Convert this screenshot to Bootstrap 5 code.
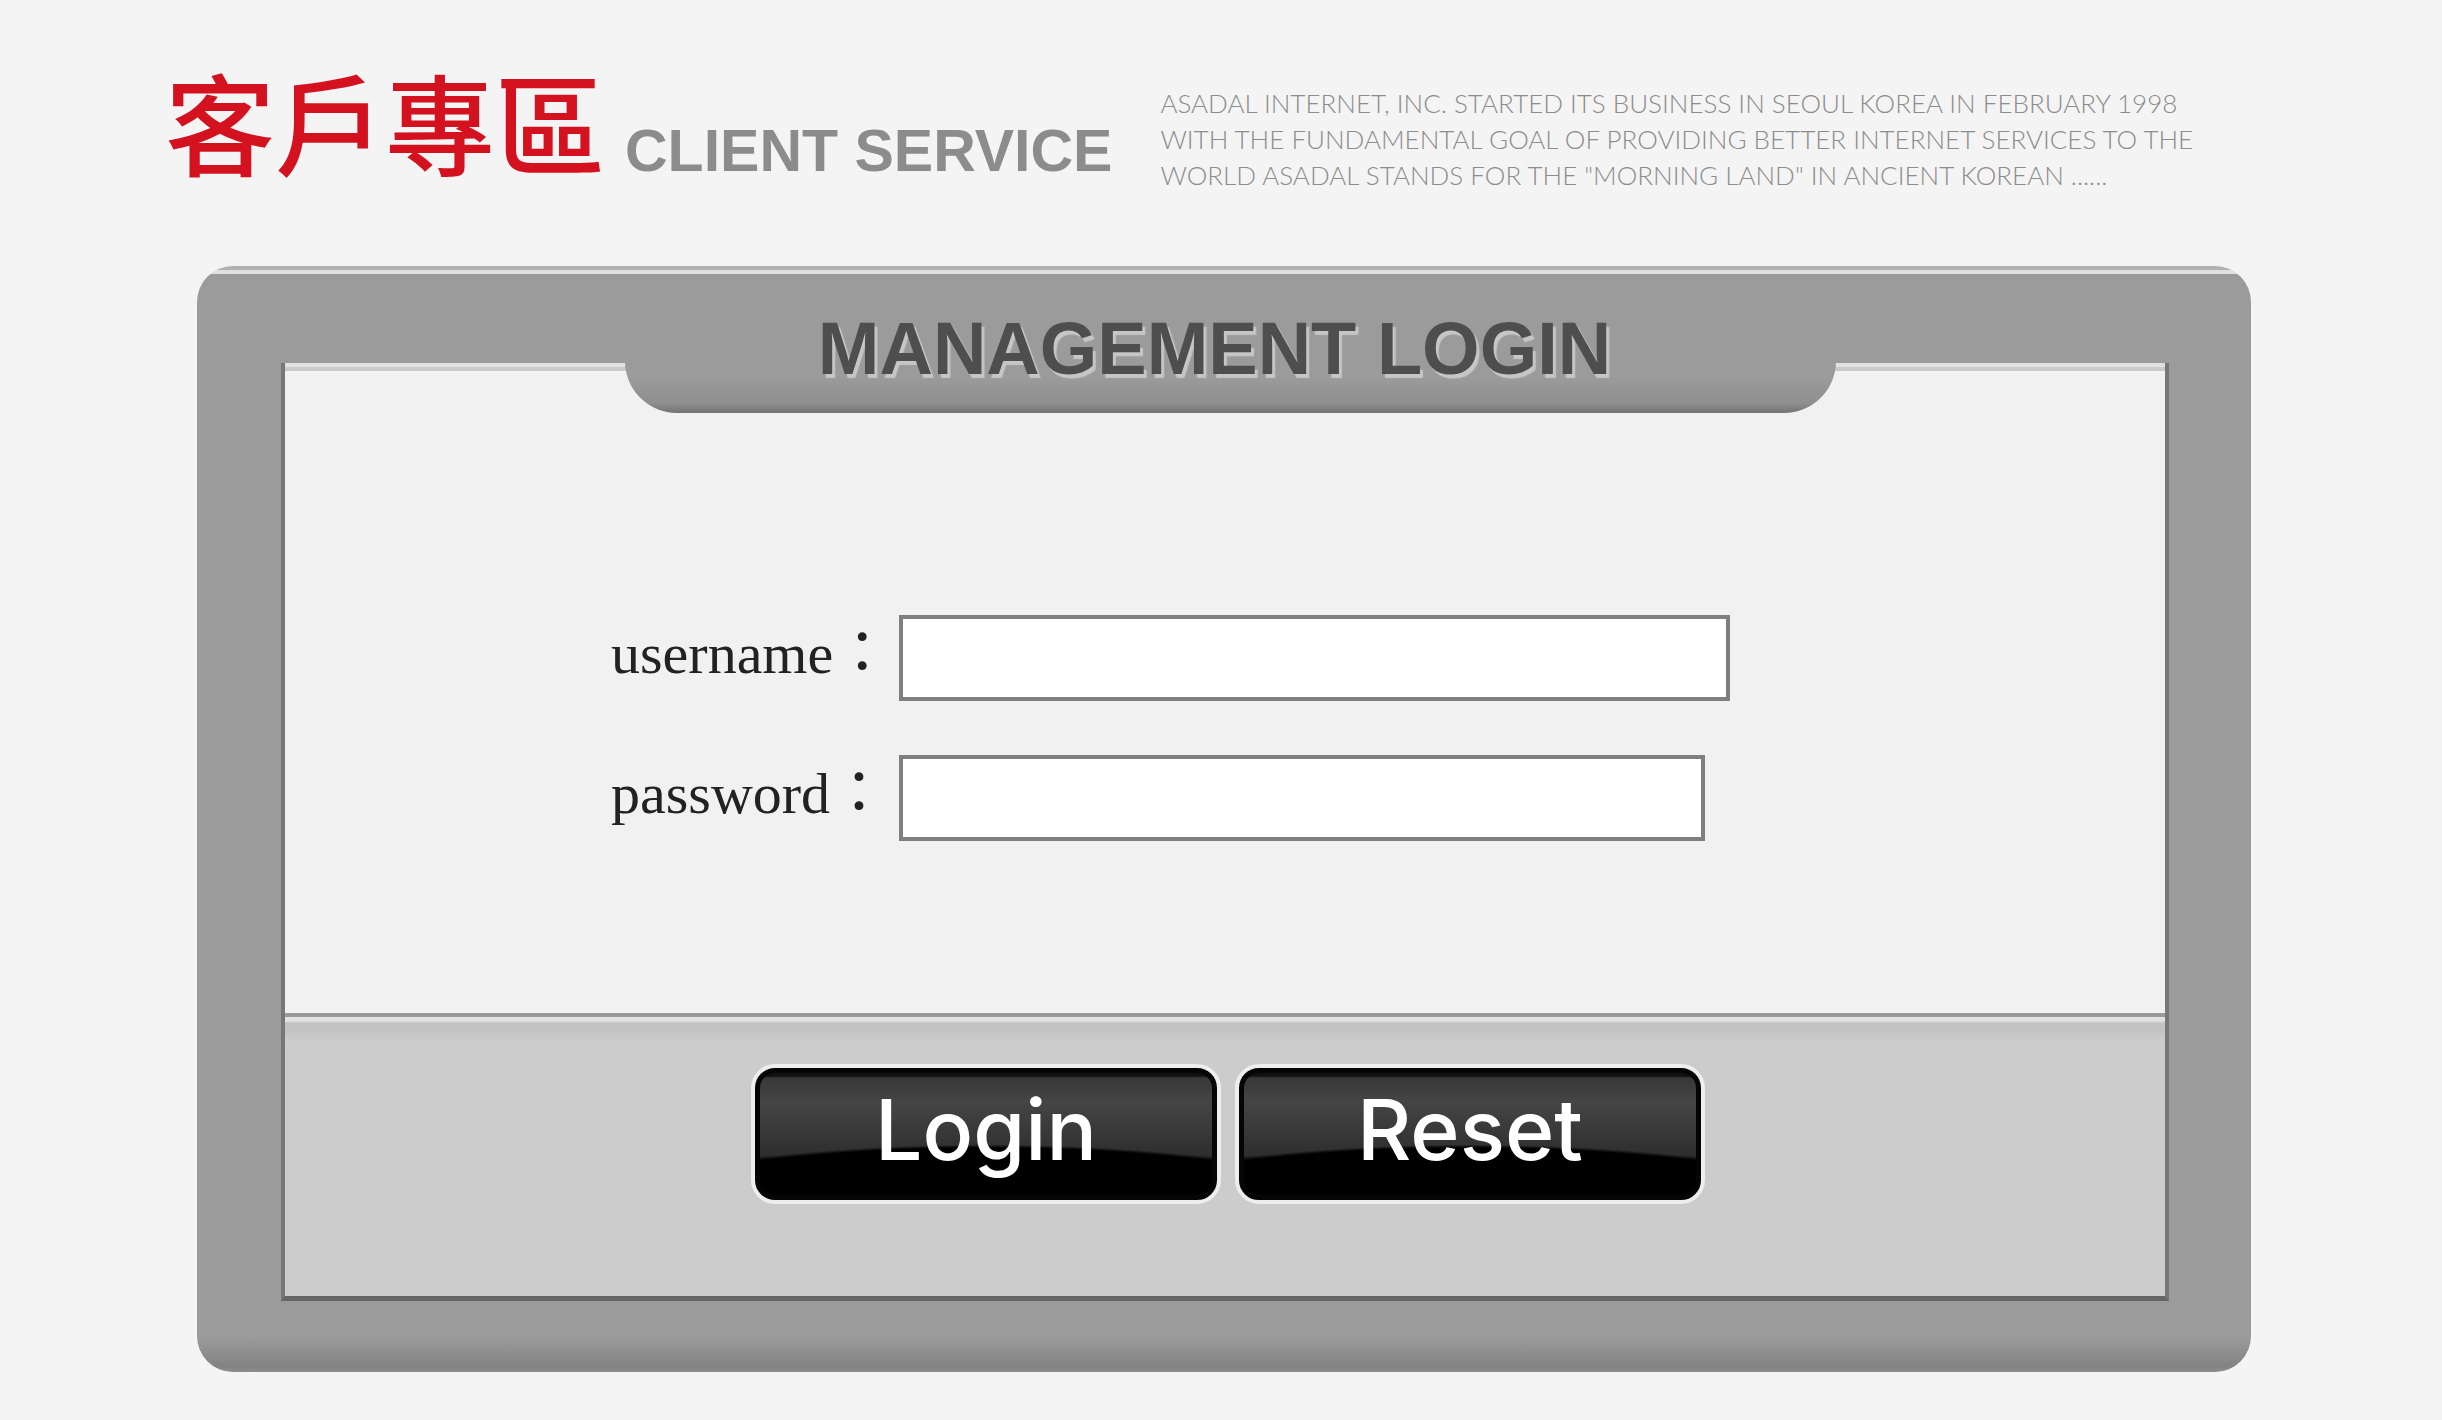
<!DOCTYPE html>
<html lang="zh-Hant">
<head>
<meta charset="utf-8">
<meta name="viewport" content="width=device-width, initial-scale=1">
<title>客戶專區 CLIENT SERVICE</title>
<link rel="stylesheet" href="https://cdn.jsdelivr.net/npm/bootstrap@5.3.0/dist/css/bootstrap.min.css">
<style>
body { background: #f4f4f4; font-family: "Liberation Sans", Arial, sans-serif; }

/* Page heading */
.site-head { padding: 64px 165px 0; height: 266px; }
.brand-zh { color: #d4121f; font: 500 110px/112px "Noto Sans CJK TC", sans-serif; }
.brand-en { color: #8c8c8c; font-size: 59px; line-height: 66px; font-weight: 700; margin: 54px 0 0 20px; }
.intro { color: #8c8c8c; font: 300 26px/36px Lato, "Liberation Sans", sans-serif; margin: 21px 0 0 48px; }

/* Grey frame with a highlight along its top edge */
.frame {
  margin: 0 191px 48px 197px;
  padding: 9px 82px 71px 84px;
  border-radius: 36px;
  background:
    linear-gradient(#b0b0b0 0 4px, #e0e0e0 4px 8px, transparent 8px) top,
    linear-gradient(transparent calc(100% - 36px), #838383 calc(100% - 6px), #8c8c8c) #9b9b9b;
}
.tab {
  margin: 0 333px -50px 344px;
  padding: 38px 32px 28px 0;
  z-index: 1;
  border-radius: 0 0 52px 52px;
  background: linear-gradient(#9b9b9b calc(100% - 36px), #8f8f8f calc(100% - 10px), #747474);
  color: #4e4e4e;
  font-size: 74px; line-height: 72px; font-weight: 700;
  text-shadow: 3px 4px 1px #c6c6c6;
}
.pane { border: solid #777; border-width: 0 4px 5px; border-bottom-color: #666; }
.pane-form {
  padding: 248px 0 168px 326px;
  gap: 46px;
  background: linear-gradient(#e2e2e2 0 4px, #cacaca 4px 8px, #f1f1f1 8px);
}
.field-name { width: 288px; color: #222; font: 400 58px/86px "Liberation Serif", "Noto Sans CJK TC", serif; padding-bottom: 8px; }
.field-box { height: 86px; border: 4px solid #7f7f7f; border-radius: 0; background: #fff; font-size: 48px; }
.field-user { width: 831px; }
.field-pass { width: 806px; }

.pane-actions {
  padding: 47px 0 92px 6px;
  gap: 14px;
  border-top: 4px solid #999;
  background: linear-gradient(#e2e2e2 0 4px, #c3c3c3 6px 12px, #ccc 24px);
}
.gloss {
  width: 470px; height: 140px; padding: 0 0 8px;
  border: 4px solid #eee; border-radius: 24px;
  color: #fff;
  font: 500 84px/100px Inter, "Liberation Sans", sans-serif;
  background:
    radial-gradient(ellipse 90% 60% at 50% 118%, #000 96%, transparent 100%),
    linear-gradient(#111 0 8px, #383838 10px, #454545 34px, #2e2e2e 66%, #0a0a0a 72%, #000) #000;
  box-shadow: inset 0 0 0 5px #050505;
}
.gloss:hover, .gloss:active { color: #fff; }
</style>
</head>
<body>
<header class="site-head d-flex align-items-start text-nowrap">
  <h1 class="brand-zh mb-0">客戶專區</h1>
  <div class="brand-en">CLIENT SERVICE</div>
  <p class="intro">ASADAL INTERNET, INC. STARTED ITS BUSINESS IN SEOUL KOREA IN FEBRUARY 1998<br>WITH THE FUNDAMENTAL GOAL OF PROVIDING BETTER INTERNET SERVICES TO THE<br>WORLD ASADAL STANDS FOR THE "MORNING LAND" IN ANCIENT KOREAN ......</p>
</header>
<main class="frame">
  <h2 class="tab position-relative text-center text-nowrap">MANAGEMENT LOGIN</h2>
  <form class="pane">
    <div class="pane-form d-flex flex-column">
      <div class="d-flex align-items-center">
        <label class="field-name flex-shrink-0" for="username">username：</label>
        <input class="field-box field-user px-3" id="username" name="username" type="text">
      </div>
      <div class="d-flex align-items-center">
        <label class="field-name flex-shrink-0" for="password">password：</label>
        <input class="field-box field-pass px-3" id="password" name="password" type="password">
      </div>
    </div>
    <div class="pane-actions d-flex justify-content-center">
      <button class="btn gloss" type="submit">Login</button>
      <button class="btn gloss" type="reset">Reset</button>
    </div>
  </form>
</main>
<script src="https://cdn.jsdelivr.net/npm/bootstrap@5.3.0/dist/js/bootstrap.bundle.min.js"></script>
</body>
</html>
